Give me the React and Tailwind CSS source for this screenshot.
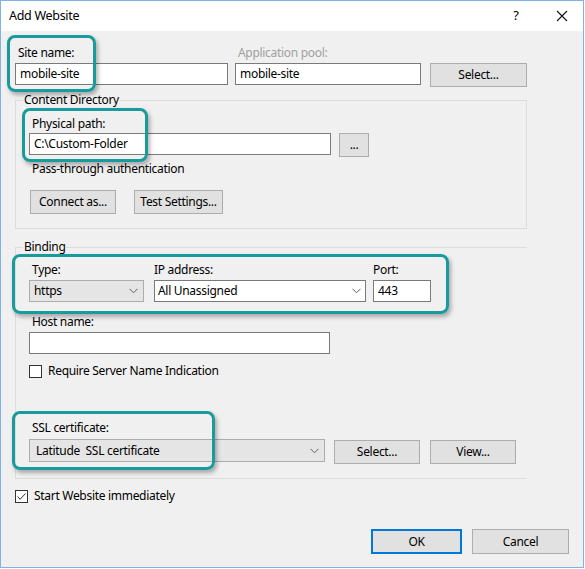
import { useState } from 'react';

const font = { fontFamily: '"Noto Sans", "Open Sans", "Liberation Sans", sans-serif' };

function Chevron() {
  return (
    <svg width="9" height="6" viewBox="0 0 9 6" className="shrink-0">
      <path d="M0.5 0.8 L4.5 4.8 L8.5 0.8" fill="none" stroke="#606060" strokeWidth="1" />
    </svg>
  );
}

function Btn({ children, className = '' }) {
  return (
    <div className={`h-[24px] flex items-center justify-center bg-[#e1e1e1] border border-[#adadad] text-[12px] text-black ${className}`}>
      {children}
    </div>
  );
}

function Label({ children, className = '', muted }) {
  return (
    <div className={`h-[16px] leading-[16px] text-[12px] whitespace-nowrap ${muted ? 'text-[#a0a0a0]' : 'text-black'} ${className}`}>
      {children}
    </div>
  );
}

function Box({ children, className = '' }) {
  return (
    <div className={`h-[22px] flex items-center px-[4px] border border-[#7a7a7a] bg-white text-[12px] text-black whitespace-nowrap ${className}`}>
      {children}
    </div>
  );
}

function Check({ checked }) {
  return (
    <div className="w-[13px] h-[13px] border border-[#333] bg-white flex items-center justify-center shrink-0">
      {checked && (
        <svg width="11" height="11" viewBox="0 0 11 11">
          <path d="M1.5 5.5 L4.2 8.3 L9.5 2.5" fill="none" stroke="#333" strokeWidth="1" />
        </svg>
      )}
    </div>
  );
}

// groupbox: legend sits on the top border like the win32 one
function Group({ title, children, className = '' }) {
  return (
    <fieldset className={`border border-[#dcdcdc] ${className}`}>
      <legend className="ml-[7px] px-[1px] h-[16px] leading-[16px] text-[12px] text-black">{title}</legend>
      <div className="pl-[13px]">{children}</div>
    </fieldset>
  );
}

export default function App() {
  const [startNow] = useState(true);

  return (
    <div className="w-[585px] h-[569px] bg-white tracking-[-0.3px]" style={font}>
      <div className="relative w-[584px] h-[568px] border border-[#7fb3e8] bg-[#f0f0f0] flex flex-col">
        {/* title bar */}
        <div className="h-[30px] bg-white flex items-center shrink-0">
          <div className="ml-[8px] text-[12.5px] text-black flex-1">Add Website</div>
          <div className="w-[20px] text-center text-[13px] text-black mr-[30px]">?</div>
          <svg width="12" height="12" viewBox="0 0 12 12" className="mr-[15px]">
            <path d="M1 1 L11 11 M11 1 L1 11" stroke="#111" strokeWidth="1.1" />
          </svg>
        </div>

        <div className="flex-1 flex flex-col pl-[14px] pt-[14px]">
          {/* site name row */}
          <div className="flex items-end">
            <div className="w-[213px]">
              <Label className="ml-[3px]">Site name:</Label>
              <Box className="mt-[2px]">mobile-site</Box>
            </div>
            <div className="w-[186px] ml-[7px] self-start">
              <Label muted className="ml-[3px]">Application pool:</Label>
              <Box className="mt-[2px] bg-[#f0f0f0]">mobile-site</Box>
            </div>
            <Btn className="w-[97px] ml-[9px] -mb-[2px]">Select...</Btn>
          </div>

          {/* content directory */}
          <Group title="Content Directory" className="w-[512px] h-[137px] mt-[7px]">
            <Label className="mt-[8px] ml-[3px]">Physical path:</Label>
            <div className="flex items-start mt-[1px]">
              <Box className="w-[302px]">C:\Custom-Folder</Box>
              <Btn className="w-[30px] ml-[8px]">...</Btn>
            </div>
            <Label className="mt-[4px] ml-[3px]">Pass-through authentication</Label>
            <div className="flex mt-[13px]">
              <Btn className="w-[86px] ml-[1px]">Connect as...</Btn>
              <Btn className="w-[89px] ml-[18px]">Test Settings...</Btn>
            </div>
          </Group>

          {/* binding */}
          <Group title="Binding" className="w-[512px] h-[240px] mt-[10px] border-r-0">
            <div className="flex mt-[7px]">
              <div className="w-[115px]">
                <Label className="ml-[3px]">Type:</Label>
                <div className="mt-[2px] h-[22px] flex items-center justify-between px-[4px] pr-[5px] bg-[#e5e5e5] border border-[#acacac] text-[12px]">
                  https <Chevron />
                </div>
              </div>
              <div className="w-[212px] ml-[10px]">
                <Label>IP address:</Label>
                <div className="mt-[2px] h-[22px] flex items-center justify-between pl-[3px] pr-[4px] bg-white border border-[#7a7a7a] text-[12px]">
                  All Unassigned <Chevron />
                </div>
              </div>
              <div className="w-[58px] ml-[7px]">
                <Label>Port:</Label>
                <Box className="mt-[2px] px-[3px]">443</Box>
              </div>
            </div>
            <Label className="mt-[12px] ml-[3px]">Host name:</Label>
            <Box className="mt-[2px] w-[301px]" />
            <div className="flex items-center mt-[9px] h-[16px]">
              <Check checked={false} />
              <span className="ml-[6px] text-[12px] text-black">Require Server Name Indication</span>
            </div>
            <Label className="mt-[41px] ml-[3px]">SSL certificate:</Label>
            <div className="flex items-start mt-[3px]">
              <div className="w-[296px] h-[23px] flex items-center justify-between pl-[6px] pr-[5px] bg-[#e5e5e5] border border-[#acacac] text-[12px]">
                <span className="whitespace-pre">Latitude  SSL certificate</span>
                <Chevron />
              </div>
              <Btn className="w-[86px] ml-[9px] mt-[1px]">Select...</Btn>
              <Btn className="w-[86px] ml-[10px] mt-[1px]">View...</Btn>
            </div>
          </Group>

          <div className="flex items-center mt-[9px] h-[16px]">
            <Check checked={startNow} />
            <span className="ml-[6px] text-[12px] text-black">Start Website immediately</span>
          </div>

          <div className="flex justify-end mt-[25px] pr-[14px]">
            <div className="w-[91px] h-[25px] flex items-center justify-center bg-[#e1e1e1] border-2 border-[#0078d7] text-[12px]">OK</div>
            <Btn className="w-[97px] h-[25px] ml-[10px]">Cancel</Btn>
          </div>
        </div>

        {/* annotation highlights */}
        <div className="absolute left-[6px] top-[34px] w-[89px] h-[57px] border-[3px] border-[#199a9c] rounded-[8px] shadow-[2px_3px_4px_rgba(0,0,0,0.3)]" />
        <div className="absolute left-[21px] top-[107px] w-[126px] h-[54px] border-[3px] border-[#199a9c] rounded-[8px] shadow-[2px_3px_4px_rgba(0,0,0,0.3)]" />
        <div className="absolute left-[11px] top-[253px] w-[437px] h-[60px] border-[3px] border-[#199a9c] rounded-[8px] shadow-[2px_3px_4px_rgba(0,0,0,0.3)]" />
        <div className="absolute left-[11px] top-[410px] w-[203px] h-[59px] border-[3px] border-[#199a9c] rounded-[8px] shadow-[2px_3px_4px_rgba(0,0,0,0.3)]" />
      </div>
    </div>
  );
}
